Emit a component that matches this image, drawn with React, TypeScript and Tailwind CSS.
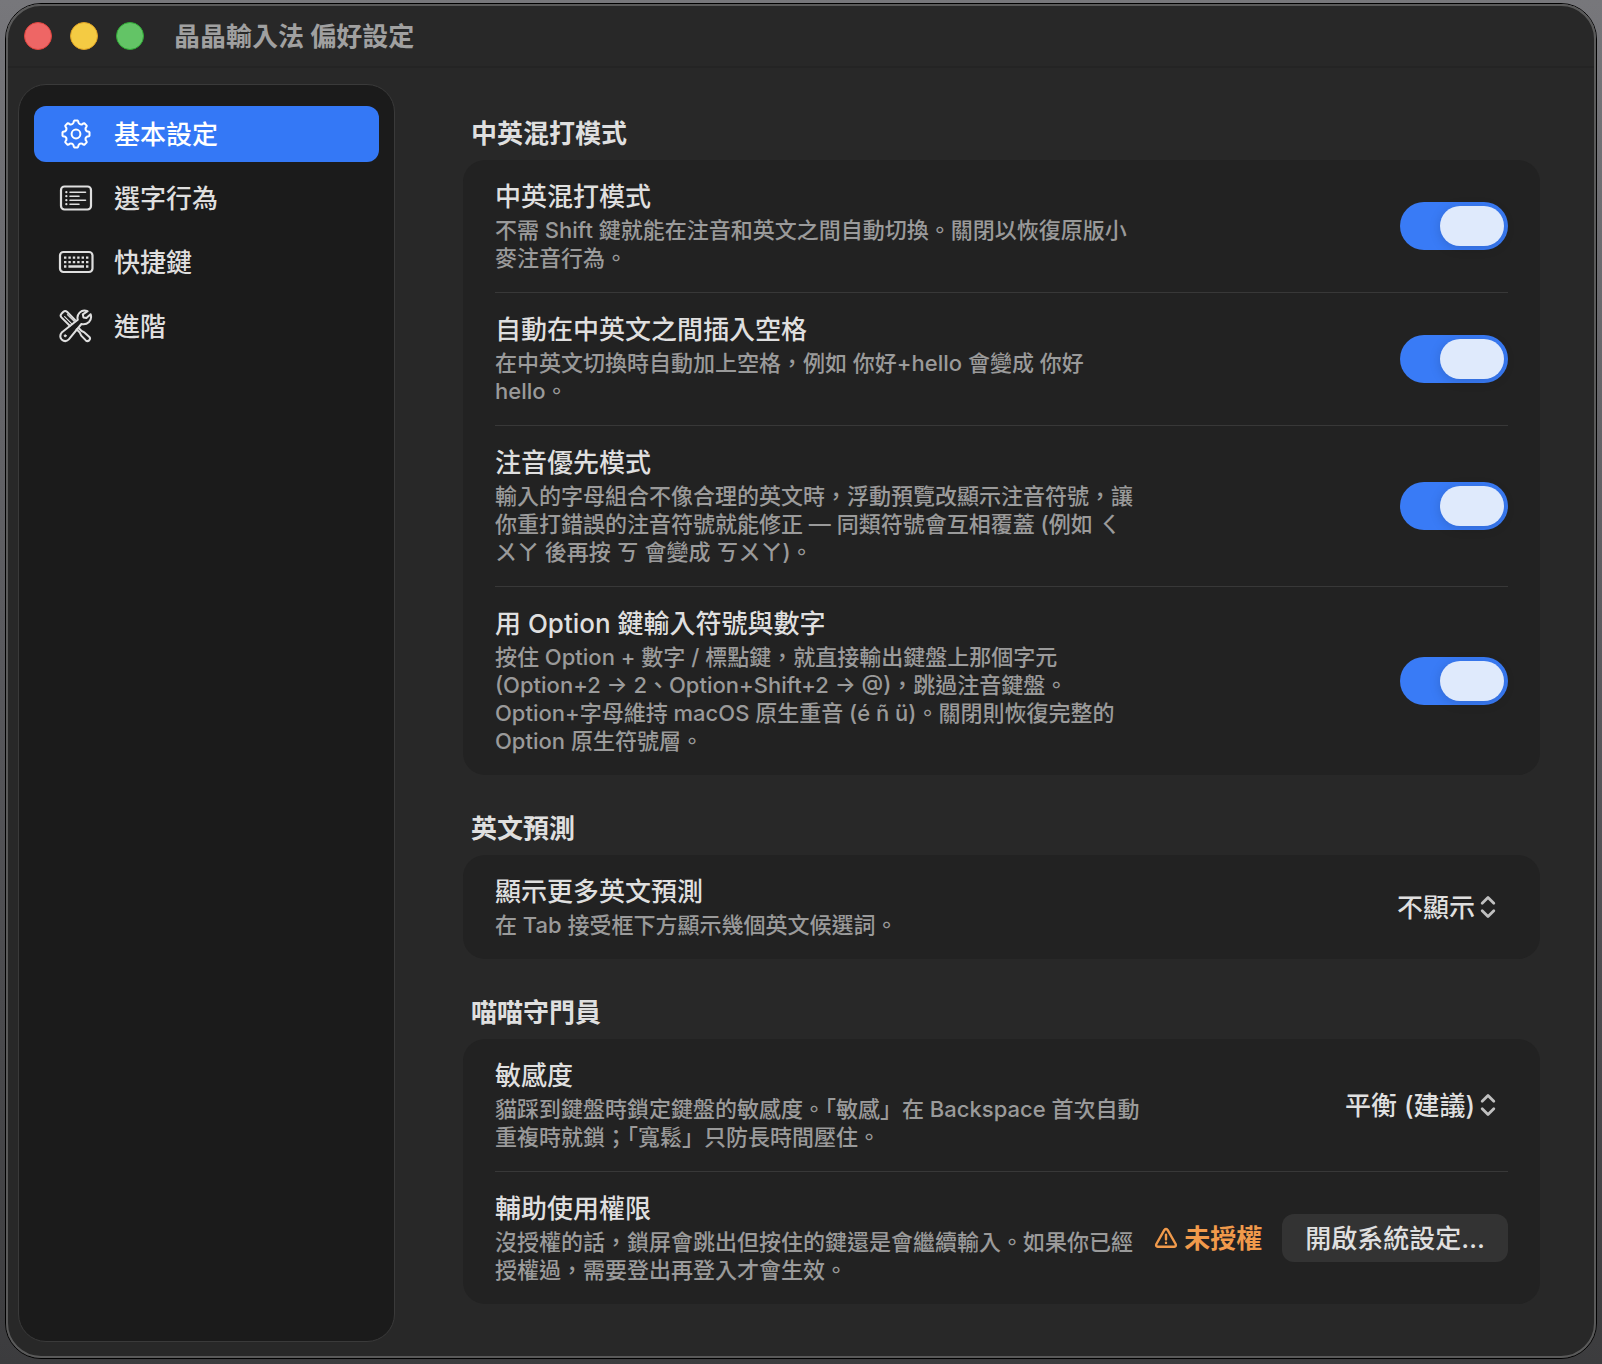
import React, { useState } from "react";
import cn from "clsx";

const TEETH = [0, 45, 90, 135, 180, 225, 270, 315];

// gear outline, 8 rounded teeth around (16, 16)
const gearPath = () => {
  const point = (deg: number, r: number) => {
    const rad = ((deg - 90) * Math.PI) / 180;
    return `${(16 + r * Math.cos(rad)).toFixed(2)} ${(16 + r * Math.sin(rad)).toFixed(2)}`;
  };
  const parts = TEETH.map(
    (a, i) =>
      `${i === 0 ? "M" : "L"}${point(a - 7, 13.6)} L${point(a + 7, 13.6)} Q${point(a + 11, 13.2)} ${point(a + 12, 11.6)} Q${point(a + 22.5, 9.6)} ${point(a + 33, 11.6)} Q${point(a + 34, 13.2)} ${point(a + 38, 13.6)}`
  );
  return parts.join(" ") + " Z";
};

function GearIcon() {
  return (
    <svg width="32" height="32" viewBox="0 0 32 32" fill="none" stroke="currentColor" strokeWidth="2" strokeLinejoin="round">
      <path d={gearPath()} />
      <circle cx="16" cy="16" r="4.4" />
    </svg>
  );
}

function ListIcon() {
  return (
    <svg width="34" height="26" viewBox="0 0 34 26" fill="none" stroke="currentColor" strokeLinecap="round">
      <rect x="2" y="1.5" width="30" height="23" rx="3.5" strokeWidth="2.2" />
      <path d="M11 7.2h15.5M11 11.2h9M11 15.2h15.5M11 19.2h9" strokeWidth="1.6" />
      <path d="M7.3 7.2h.1M7.3 11.2h.1M7.3 15.2h.1M7.3 19.2h.1" strokeWidth="2.2" />
    </svg>
  );
}

function KeyboardIcon() {
  return (
    <svg width="36" height="24" viewBox="0 0 36 24" fill="none" stroke="currentColor">
      <rect x="2" y="2" width="32.5" height="20" rx="3.5" strokeWidth="2.2" />
      <path
        d="M6 7.7h2.4M10.4 7.7h2.4M14.8 7.7h2.4M19.2 7.7h2.4M23.6 7.7h2.4M28 7.7h2.4M6 12.1h2.4M10.4 12.1h2.4M14.8 12.1h2.4M19.2 12.1h2.4M23.6 12.1h2.4M28 12.1h2.4M6 16.5h2.4M10.4 16.5h15.6M28 16.5h2.4"
        strokeWidth="2.3"
      />
    </svg>
  );
}

function ToolsIcon() {
  return (
    <svg width="34" height="34" viewBox="0 0 34 34" fill="none" stroke="currentColor" strokeWidth="2" strokeLinecap="round" strokeLinejoin="round">
      {/* screwdriver */}
      <path d="M10.8 16.8 2.4 8.4Q.8 6.6 2.4 4.8L4.4 2.8Q6.2 1.2 8 2.8l8 8.2" />
      <path d="M5.6 7.6l7 7M8.4 5.6l6.8 6.8" strokeWidth="1.2" />
      <path d="M17.6 20.4l3.2 3.2 1.4 3 4.6 4.8q1.6 1.4 3.4 0 1.6-1.8.2-3.4l-5-4.6-2.8-1.4-3-3" />
      {/* wrench */}
      <path d="M28.6 2.2Q24 .2 20.6 3.6q-3 3.2-1.8 7.2L3 23.2q-3.2 3.8-.4 7.2 3.8 3.4 7.2 0L22.4 15q4.4 1 7.6-2 3.2-3.4 1.6-7.8l-4.2 3.8-3-.6-.6-3z" />
      <circle cx="6.2" cy="26.8" r="1" fill="currentColor" strokeWidth="1" />
    </svg>
  );
}

function WarningIcon() {
  return (
    <svg width="24" height="22" viewBox="0 0 24 22" fill="none" stroke="currentColor" strokeWidth="2.4" strokeLinecap="round" strokeLinejoin="round">
      <path d="M10.4 2.9 2.4 17q-1 2.4 1.4 2.7h16.4q2.4-.3 1.4-2.7l-8-14.1q-1.6-1.9-3.2 0z" />
      <path d="M12 7.8v4.6M12 15.8v.1" />
    </svg>
  );
}

const menu = [
  { label: "基本設定", icon: <GearIcon /> },
  { label: "選字行為", icon: <ListIcon /> },
  { label: "快捷鍵", icon: <KeyboardIcon /> },
  { label: "進階", icon: <ToolsIcon /> },
];

interface RowProps {
  id: string;
  title: string;
  lines: string[];
  children: React.ReactNode;
}

function Row({ id, title, lines, children }: RowProps) {
  return (
    <div className="flex items-center justify-between border-t border-[#383838] first:border-t-0">
      <div className="shrink-0 pt-[21px] pb-5">
        <label htmlFor={id} className="block text-[26px] leading-8 text-[#dfdfdf]">
          {title}
        </label>
        <p className="mt-[3px] text-[22px] leading-7 whitespace-nowrap text-[#9a9a9a]">
          {lines.map((line, index) => (
            <span key={index} className="block">
              {line}
            </span>
          ))}
        </p>
      </div>
      {children}
    </div>
  );
}

function Section({ title, children }: { title: string; children: React.ReactNode }) {
  return (
    <section>
      <h2 className="mb-[10px] pl-2 text-[26px] leading-8 font-bold text-[#dfdfdf]">{title}</h2>
      <div className="rounded-[22px] bg-[#222222] px-8">{children}</div>
    </section>
  );
}

function Toggle({ id }: { id: string }) {
  const [on, setOn] = useState(true);

  return (
    <input
      id={id}
      type="checkbox"
      role="switch"
      checked={on}
      onChange={() => setOn(!on)}
      className="h-12 w-[108px] shrink-0 appearance-none rounded-full bg-[#4a4a4a] p-1 before:block before:h-10 before:w-16 before:rounded-full before:bg-[#dfeafc] before:shadow-[0_2px_12px_rgba(0,0,0,0.15)] checked:bg-[#397bf6] checked:before:ml-9"
    />
  );
}

function Picker({ id, value }: { id: string; value: string }) {
  return (
    <div className="relative shrink-0">
      <select id={id} className="h-12 appearance-none bg-transparent pr-8 text-[26px] text-[#dfdfdf]">
        <option>{value}</option>
      </select>
      <svg
        className="pointer-events-none absolute top-3 right-3 text-[#c0c0c0]"
        width="16"
        height="24"
        viewBox="0 0 16 24"
        fill="none"
        stroke="currentColor"
        strokeWidth="2.8"
        strokeLinecap="round"
        strokeLinejoin="round"
      >
        <path d="M2.2 8.2 8 2.4l5.8 5.8M2.2 15.8 8 21.6l5.8-5.8" />
      </svg>
    </div>
  );
}

export default function App() {
  const [current, setCurrent] = useState(0);

  return (
    <div className="flex min-h-screen bg-linear-to-b from-[#77777b] via-[#58585c] to-[#3c3c3e] px-[5px] pt-[3px] pb-[5px] font-['Inter','Noto_Sans_CJK_TC',sans-serif] font-medium">
      <div className="flex flex-1 rounded-[36px] border border-black">
        <div className="flex flex-1 flex-col rounded-[35px] border-2 border-[#5a5a5a] bg-[#282828]">
          <header className="flex items-center border-b-2 border-[#242424] pl-4">
            <div className="flex gap-[18px]">
              <button type="button" aria-label="關閉" className="size-7 rounded-full border border-[#e0443e] bg-[#ee6665]" />
              <button type="button" aria-label="縮到最小" className="size-7 rounded-full border border-[#dea123] bg-[#f4cb43]" />
              <button type="button" aria-label="縮放" className="size-7 rounded-full border border-[#2fac35] bg-[#63c466]" />
            </div>
            <h1 className="pt-0.5 pl-[30px] text-[26px] leading-[58px] font-bold text-[#a0a0a0]">晶晶輸入法 偏好設定</h1>
          </header>

          <div className="flex flex-1">
            <nav className="mt-4 mb-[14px] ml-[10px] flex w-[377px] shrink-0 flex-col gap-2 rounded-[28px] border border-[#3a3a3a] bg-[#1b1b1b] px-[15px] pt-[21px]">
              {menu.map((item, index) => (
                <button
                  key={item.label}
                  type="button"
                  onClick={() => setCurrent(index)}
                  className={cn(
                    "flex h-14 items-center rounded-xl pl-6 text-left text-[26px]",
                    index === current ? "bg-[#3478f6] text-white" : "text-[#dfdfdf]"
                  )}
                >
                  <span className="flex w-9 justify-center">{item.icon}</span>
                  <span className="pl-5">{item.label}</span>
                </button>
              ))}
            </nav>

            <main className="flex flex-1 flex-col gap-[38px] pt-[50px] pr-[54px] pl-[68px]">
              <Section title="中英混打模式">
                <Row id="mixed" title="中英混打模式" lines={["不需 Shift 鍵就能在注音和英文之間自動切換。關閉以恢復原版小", "麥注音行為。"]}>
                  <Toggle id="mixed" />
                </Row>
                <Row id="spacing" title="自動在中英文之間插入空格" lines={["在中英文切換時自動加上空格，例如 你好+hello 會變成 你好", "hello。"]}>
                  <Toggle id="spacing" />
                </Row>
                <Row
                  id="bopomofo"
                  title="注音優先模式"
                  lines={[
                    "輸入的字母組合不像合理的英文時，浮動預覽改顯示注音符號，讓",
                    "你重打錯誤的注音符號就能修正 — 同類符號會互相覆蓋 (例如 ㄑ",
                    "ㄨㄚ 後再按 ㄎ 會變成 ㄎㄨㄚ)。",
                  ]}
                >
                  <Toggle id="bopomofo" />
                </Row>
                <Row
                  id="option"
                  title="用 Option 鍵輸入符號與數字"
                  lines={[
                    "按住 Option + 數字 / 標點鍵，就直接輸出鍵盤上那個字元",
                    "(Option+2 → 2、Option+Shift+2 → @)，跳過注音鍵盤。",
                    "Option+字母維持 macOS 原生重音 (é ñ ü)。關閉則恢復完整的",
                    "Option 原生符號層。",
                  ]}
                >
                  <Toggle id="option" />
                </Row>
              </Section>

              <Section title="英文預測">
                <Row id="predict" title="顯示更多英文預測" lines={["在 Tab 接受框下方顯示幾個英文候選詞。"]}>
                  <Picker id="predict" value="不顯示" />
                </Row>
              </Section>

              <Section title="喵喵守門員">
                <Row id="sensitivity" title="敏感度" lines={["貓踩到鍵盤時鎖定鍵盤的敏感度。「敏感」在 Backspace 首次自動", "重複時就鎖；「寬鬆」只防長時間壓住。"]}>
                  <Picker id="sensitivity" value="平衡 (建議)" />
                </Row>
                <Row id="access" title="輔助使用權限" lines={["沒授權的話，鎖屏會跳出但按住的鍵還是會繼續輸入。如果你已經", "授權過，需要登出再登入才會生效。"]}>
                  <div className="flex shrink-0 items-center">
                    <span className="flex items-center gap-[6px] pr-5 text-[26px] font-bold text-[#f19a4b]">
                      <WarningIcon />
                      未授權
                    </span>
                    <button id="access" type="button" className="h-12 rounded-xl bg-[#333333] px-[23px] text-[26px] text-[#dfdfdf]">
                      開啟系統設定…
                    </button>
                  </div>
                </Row>
              </Section>
            </main>
          </div>
        </div>
      </div>
    </div>
  );
}
